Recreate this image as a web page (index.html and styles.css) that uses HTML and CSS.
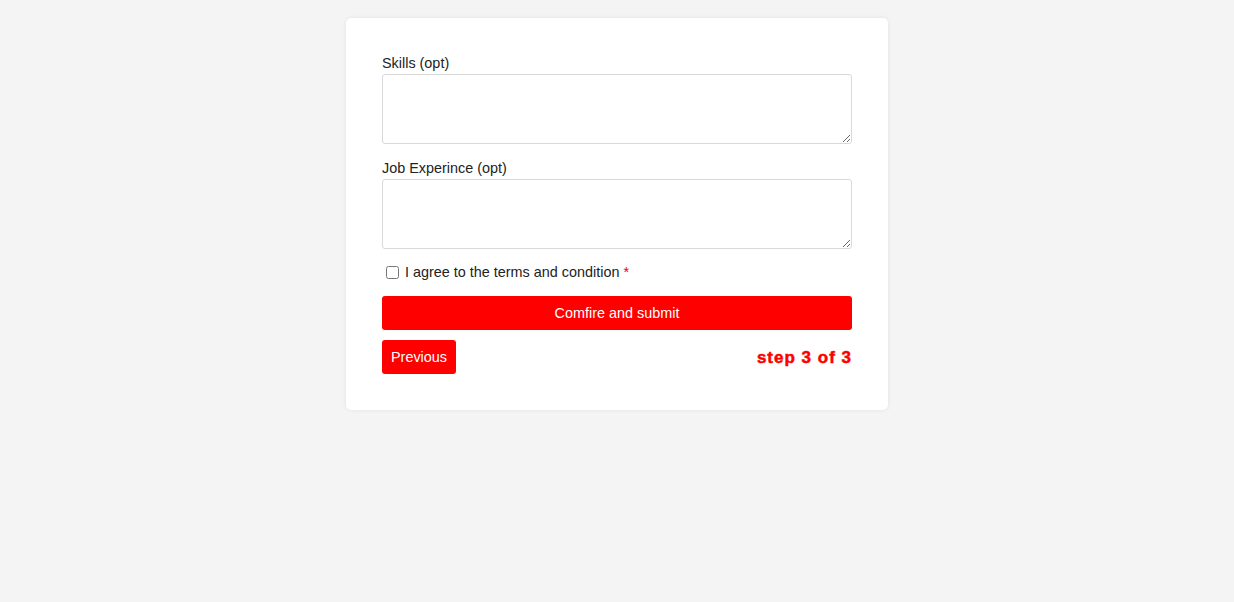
FILE: index.html
```html
<!DOCTYPE html>
<html>
<head>
<meta charset="utf-8">
<link rel="stylesheet" href="styles.css">
</head>
<body>
<div class="page">
  <form class="card">
    <label class="label" for="skills">Skills (opt)</label>
    <textarea id="skills" class="area"></textarea>
    <label class="label" for="exp">Job Experince (opt)</label>
    <textarea id="exp" class="area"></textarea>
    <div class="check-row">
      <input type="checkbox" id="agree" class="check">
      <label for="agree" class="check-label">I agree to the terms and condition <span class="req">*</span></label>
    </div>
    <button type="button" class="btn btn-full">Comfire and submit</button>
    <div class="footer">
      <button type="button" class="btn btn-prev">Previous</button>
      <span class="step">step 3 of 3</span>
    </div>
  </form>
</div>
</body>
</html>
```

FILE: styles.css
```css
* { box-sizing: border-box; }
html, body { margin: 0; padding: 0; }
body {
  background: #f4f4f4;
  font-family: "Liberation Sans", Arial, sans-serif;
  color: #222;
  height: 602px;
}
.page {
  display: flex;
  justify-content: center;
  padding-top: 18px;
}
.card {
  width: 542px;
  background: #fff;
  border-radius: 5px;
  box-shadow: 0 0 4px rgba(0,0,0,0.08);
  padding: 36px 36px 36px 36px;
  display: flex;
  flex-direction: column;
}
.label {
  font-size: 14.4px;
  line-height: 17px;
  padding-top: 1px;
  margin-bottom: 2px;
  color: #222;
}
.area {
  width: 470px;
  height: 70px;
  border: 1px solid #d9d9d9;
  border-radius: 3px;
  margin: 0 0 15px 0;
  resize: vertical;
  font-family: inherit;
  display: block;
}
.check-row {
  display: flex;
  align-items: center;
  height: 17px;
  margin-bottom: 15px;
  margin-top: 0;
}
.check {
  margin: 0 6px 0 4px;
  width: 13px;
  height: 13px;
}
.check-label {
  font-size: 14.4px;
  line-height: 17px;
  color: #222;
}
.req { color: #e00; }
.btn {
  background: #ff0000;
  color: #fff;
  border: none;
  border-radius: 3px;
  font-family: "Liberation Sans", Arial, sans-serif;
  font-size: 14.4px;
  height: 34px;
  cursor: pointer;
}
.btn-full {
  width: 470px;
}
.footer {
  margin-top: 10px;
  display: flex;
  justify-content: space-between;
  align-items: center;
}
.btn-prev {
  padding: 0 9px;
  width: 74px;
}
.step {
  color: #f00;
  font-weight: 900;
  font-size: 17px;
  letter-spacing: 1px;
  margin-right: 0;
  margin-top: 1px;
  -webkit-text-stroke: 0.5px #f00;
}
```
